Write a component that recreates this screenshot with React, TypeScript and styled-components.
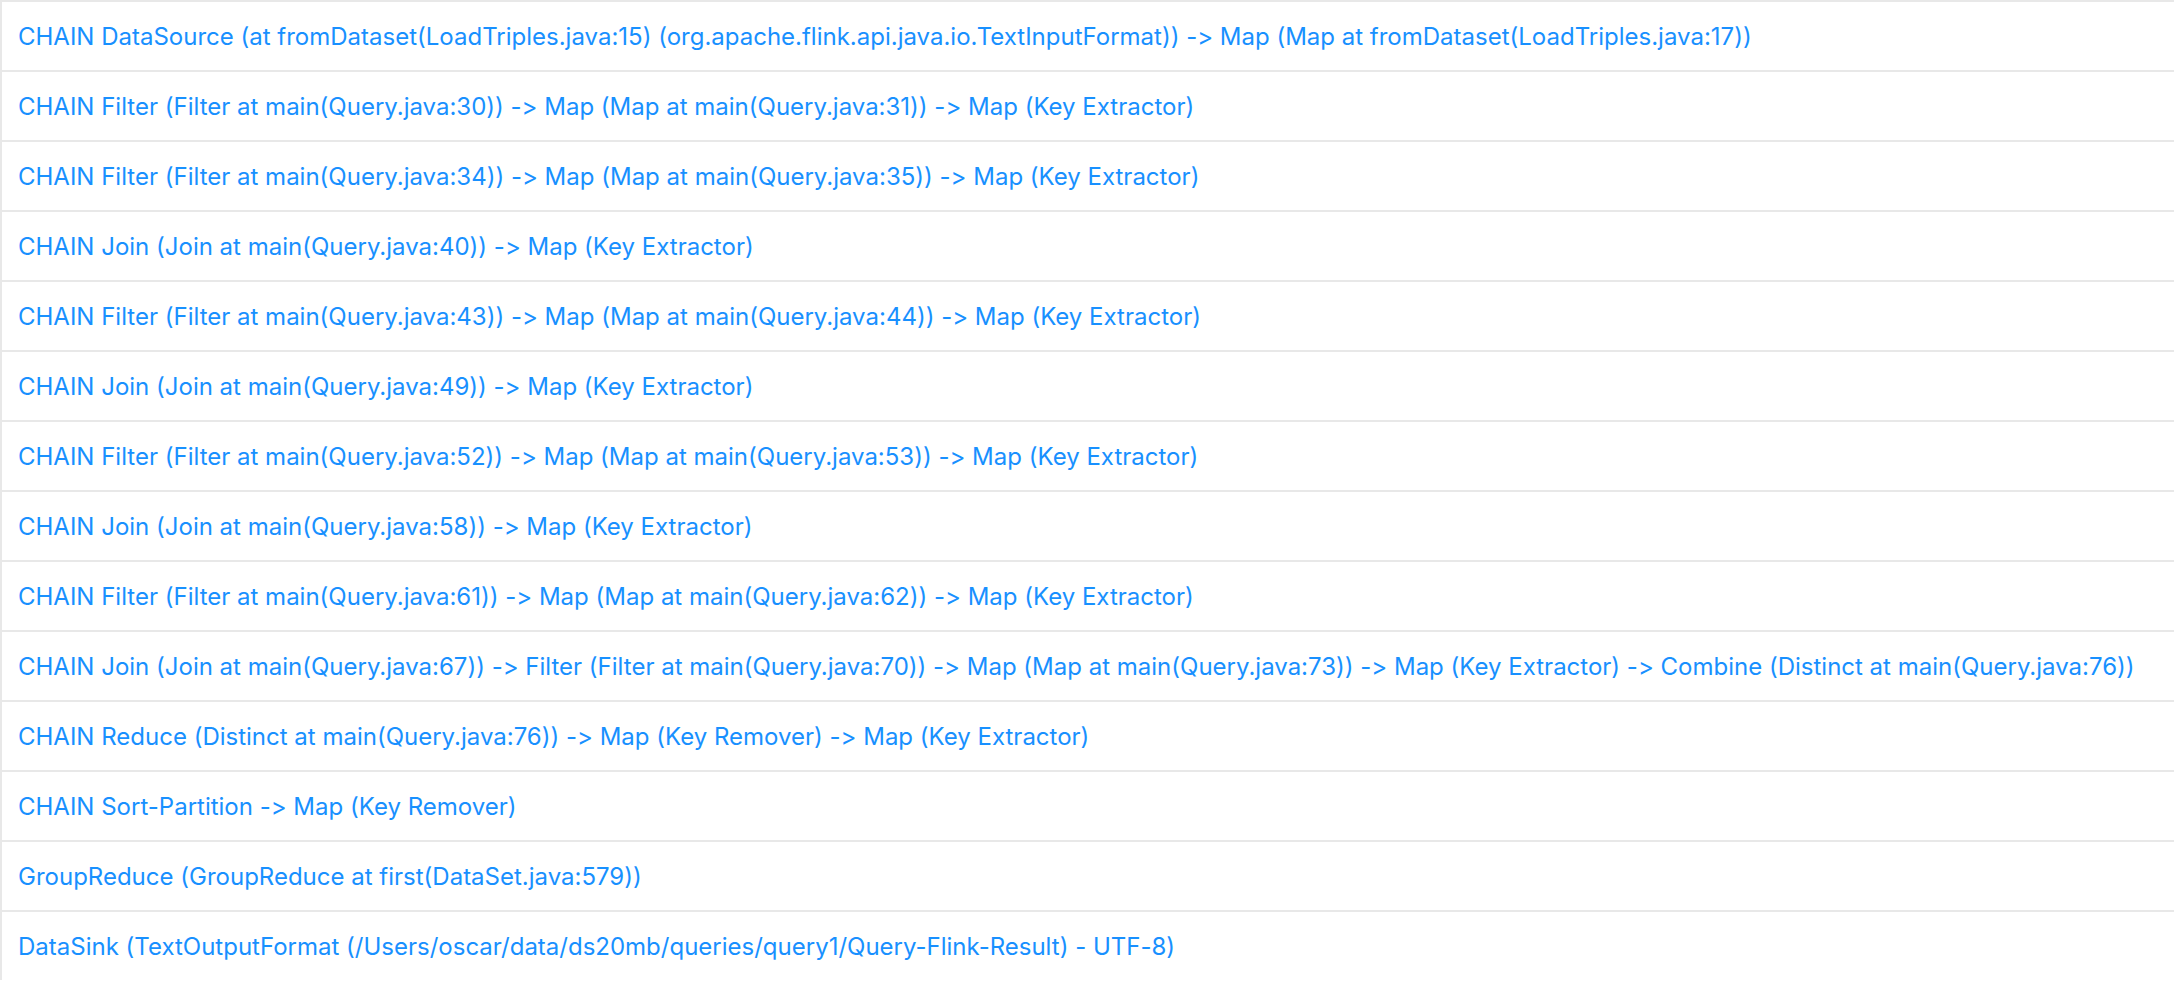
import React from "react";
import styled, { createGlobalStyle } from "styled-components";

const GlobalStyle = createGlobalStyle`
  html, body {
    margin: 0;
    padding: 0;
    background: #ffffff;
  }
  body {
    font-family: Inter, "Noto Sans", "Liberation Sans", sans-serif;
  }
`;

const List = styled.div`
  display: flex;
  flex-direction: column;
  width: 100%;
`;

const Row = styled.div`
  display: flex;
  align-items: center;
  height: 68px;
  padding: 0 16px;
  border-top: 2px solid #e8e8e8;
  border-left: 2px solid #e8e8e8;
`;

const Name = styled.a`
  color: #1890ff;
  font-size: 24px;
  font-feature-settings: "calt" 0, "liga" 0;
  font-variant-ligatures: none;
  text-decoration: none;
  white-space: nowrap;
  cursor: pointer;
`;

const vertices = [
  "CHAIN DataSource (at fromDataset(LoadTriples.java:15) (org.apache.flink.api.java.io.TextInputFormat)) -> Map (Map at fromDataset(LoadTriples.java:17))",
  "CHAIN Filter (Filter at main(Query.java:30)) -> Map (Map at main(Query.java:31)) -> Map (Key Extractor)",
  "CHAIN Filter (Filter at main(Query.java:34)) -> Map (Map at main(Query.java:35)) -> Map (Key Extractor)",
  "CHAIN Join (Join at main(Query.java:40)) -> Map (Key Extractor)",
  "CHAIN Filter (Filter at main(Query.java:43)) -> Map (Map at main(Query.java:44)) -> Map (Key Extractor)",
  "CHAIN Join (Join at main(Query.java:49)) -> Map (Key Extractor)",
  "CHAIN Filter (Filter at main(Query.java:52)) -> Map (Map at main(Query.java:53)) -> Map (Key Extractor)",
  "CHAIN Join (Join at main(Query.java:58)) -> Map (Key Extractor)",
  "CHAIN Filter (Filter at main(Query.java:61)) -> Map (Map at main(Query.java:62)) -> Map (Key Extractor)",
  "CHAIN Join (Join at main(Query.java:67)) -> Filter (Filter at main(Query.java:70)) -> Map (Map at main(Query.java:73)) -> Map (Key Extractor) -> Combine (Distinct at main(Query.java:76))",
  "CHAIN Reduce (Distinct at main(Query.java:76)) -> Map (Key Remover) -> Map (Key Extractor)",
  "CHAIN Sort-Partition -> Map (Key Remover)",
  "GroupReduce (GroupReduce at first(DataSet.java:579))",
  "DataSink (TextOutputFormat (/Users/oscar/data/ds20mb/queries/query1/Query-Flink-Result) - UTF-8)",
];

export default function App() {
  return (
    <>
      <GlobalStyle />
      <List>
        {vertices.map((v, i) => (
          <Row key={i}>
            <Name>{v}</Name>
          </Row>
        ))}
      </List>
    </>
  );
}
